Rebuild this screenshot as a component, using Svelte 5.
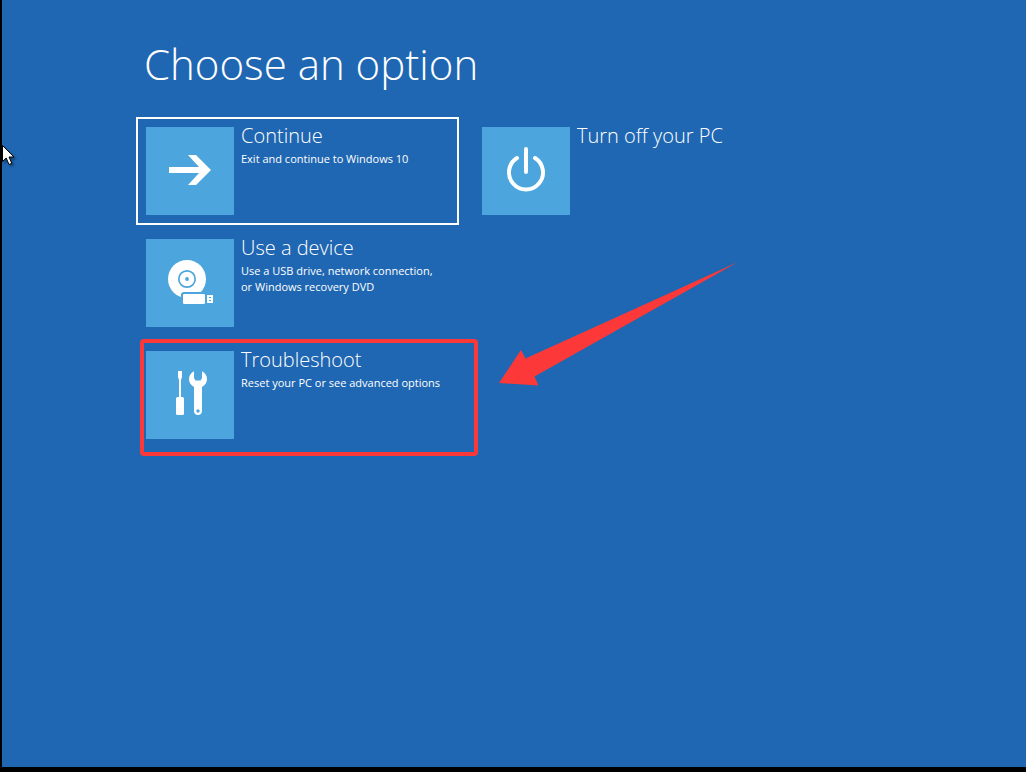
<script>
  const options = [
    { id: 'continue', title: 'Continue', lines: ['Exit and continue to Windows 10'], focused: true },
    { id: 'device', title: 'Use a device', lines: ['Use a USB drive, network connection,', 'or Windows recovery DVD'] },
    { id: 'troubleshoot', title: 'Troubleshoot', lines: ['Reset your PC or see advanced options'], marked: true },
    { id: 'power', title: 'Turn off your PC', lines: [] }
  ];
</script>

<main class="screen">
  <h1>Choose an option</h1>

  <div class="options">
    {#each options as option (option.id)}
      <div class="cell">
        <button type="button" class="option" class:focused={option.focused}>
          <svg class="icon" viewBox="0 0 88 88" aria-hidden="true">
            {#if option.id === 'continue'}
              <path fill="#fff" d="M23 40H53L42 28H50L65 43L50 58H42L53 46H23Z" />
            {:else if option.id === 'device'}
              <circle cx="41" cy="40" r="19" fill="#fff" />
              <circle cx="41" cy="40" r="8.2" fill="none" stroke="#4ca5dc" stroke-width="1.7" />
              <circle cx="41" cy="40" r="1.9" fill="#4ca5dc" />
              <path fill="#4ca5dc" d="M35 66V56Q35 53 38 53H62V66Z" />
              <rect x="37" y="55" width="22" height="10" rx="1.2" fill="#fff" />
              <rect x="61" y="56" width="6" height="8" fill="#fff" />
              <path fill="#4ca5dc" d="M63 58h2v1h-2zM63 61h2v1h-2z" />
            {:else if option.id === 'troubleshoot'}
              <path fill="#fff" d="M32 20H36V26L35 29V46H36.500Q38 46 38 47.500V62.500Q38 64 36.500 64H31.500Q30 64 30 62.500V47.500Q30 46 31.500 46H33V29L32 26Z" />
              <path fill="#fff" fill-rule="evenodd" d="M48 20.200C44.500 22 43 25 43 28C43 31.500 45 34.500 48 36V60C48 62.500 49.700 64 52 64S56 62.500 56 60V36C59 34.500 61 31.500 61 28C61 25 59.500 22 56 20.200V27L54.500 29.500H49.500L48 27ZM52 58.300A1.700 1.700 0 1 1 52 61.700A1.700 1.700 0 1 1 52 58.300Z" />
            {:else}
              <path fill="none" stroke="#fff" stroke-width="4" stroke-linecap="round" d="M44 22V45M35 31A17 17 0 1 0 53 31" />
            {/if}
          </svg>
          <span class="label">
            <span class="title">{option.title}</span>
            {#each option.lines as line}
              <span class="line">{line}</span>
            {/each}
          </span>
        </button>
        {#if option.marked}
          <span class="highlight"></span>
          <svg class="pointer" viewBox="0 0 240 124" aria-hidden="true">
            <path fill="#fd3838" d="M0 121L22 88L26.500 96.500L239 0L35.500 114.500L39.500 123.500Z" />
          </svg>
        {/if}
      </div>
    {/each}
  </div>

  <svg class="cursor" viewBox="0 0 16 22" aria-hidden="true">
    <path fill="#fff" stroke="#000" stroke-width="1" d="M0.500 0.500V16.500L4.200 13L7 19.500L9.800 18.300L7 12H12Z" />
  </svg>
</main>

<style>
  :global(body) {
    margin: 0;
    background: #000;
  }

  .screen {
    position: relative;
    box-sizing: border-box;
    min-height: 100vh;
    padding: 32px 16px 32px 134px;
    border-left: 2px solid #000;
    border-bottom: 5px solid #000;
    overflow: hidden;
    background: #1f67b2;
    color: #fff;
    font-family: "Open Sans", "Noto Sans", sans-serif;
  }

  h1 {
    margin: 0 0 21px 8px;
    font-size: 42px;
    line-height: 64px;
    font-weight: 300;
  }

  .options {
    display: grid;
    grid-template-columns: repeat(2, minmax(0, 323px));
    grid-template-rows: repeat(3, auto);
    grid-auto-flow: column;
    gap: 4px 13px;
  }

  .cell {
    position: relative;
  }

  .option {
    display: flex;
    gap: 7px;
    width: 100%;
    box-sizing: border-box;
    margin: 0;
    padding: 8px;
    border: 2px solid transparent;
    background: none;
    color: inherit;
    font: inherit;
    text-align: left;
  }

  .focused {
    border-color: #fff;
  }

  .icon {
    flex: none;
    width: 88px;
    height: 88px;
    background: #4ca5dc;
  }

  .label {
    display: flex;
    flex-direction: column;
    white-space: nowrap;
  }

  .title {
    margin-bottom: 6px;
    font-size: 20px;
    line-height: 18px;
    font-weight: 300;
  }

  .line {
    font-size: 11px;
    line-height: 16px;
  }

  .highlight {
    position: absolute;
    inset: -2px -19px -7px 4px;
    border: 4px solid #fd3838;
    border-radius: 4px;
    pointer-events: none;
  }

  .pointer {
    position: absolute;
    left: 363px;
    top: -79px;
    width: 240px;
    height: 124px;
    z-index: 1;
    pointer-events: none;
  }

  .cursor {
    position: absolute;
    left: 0;
    top: 145px;
    width: 16px;
    height: 22px;
    filter: drop-shadow(2px 2px 1px rgb(0 0 0 / 0.35));
  }
</style>
